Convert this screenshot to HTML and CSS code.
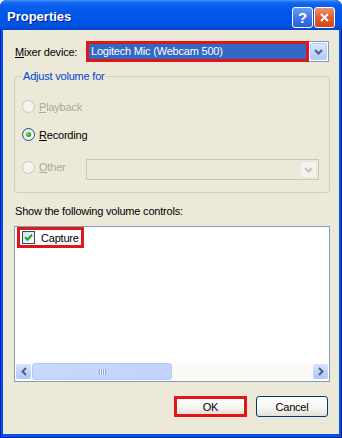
FILE: index.html
```html
<!doctype html>
<html lang="en">
  <head>
    <meta charset="utf-8">
    <meta name="viewport" content="width=device-width, initial-scale=1.0">
    <title>Properties</title>
    <link rel="stylesheet" href="styles.css">
  </head>
  <body>
    <div class="window">
      <div class="titlebar">
        <span class="caption">Properties</span>
        <span class="tbtn help">?</span>
        <span class="tbtn close">
          <svg width="11" height="11" viewBox="0 0 11 11"><path d="M2 2 L9 9 M9 2 L2 9" stroke="#fff" stroke-width="2" fill="none"/></svg>
        </span>
      </div>
      <div class="client">
        <div class="mixer">
          <label class="mixer-label"><u>M</u>ixer device:</label>
          <div class="combo">
            <span class="combo-sel">Logitech Mic (Webcam 500)</span>
            <span class="drop">
              <svg width="9" height="6" viewBox="0 0 9 6"><path d="M1 1 L4.5 4.5 L8 1" fill="none" stroke="#4D6185" stroke-width="2"/></svg>
            </span>
          </div>
        </div>
        <fieldset class="group">
          <legend>Adjust volume for</legend>
          <div class="opt first disabled"><span class="radio"></span><span><u>P</u>layback</span></div>
          <div class="opt second"><span class="radio checked"></span><span><u>R</u>ecording</span></div>
          <div class="opt other disabled">
            <span class="radio"></span><span class="opt-text"><u>O</u>ther</span>
            <div class="combo off">
              <span class="combo-empty"></span>
              <span class="drop off">
                <svg width="9" height="6" viewBox="0 0 9 6"><path d="M1 1 L4.5 4.5 L8 1" fill="none" stroke="#C3C3C3" stroke-width="2"/></svg>
              </span>
            </div>
          </div>
        </fieldset>
        <div class="show">Show the following volume controls:</div>
        <div class="list">
          <div class="items">
            <div class="item">
              <span class="check">
                <svg width="9" height="9" viewBox="0 0 9 9"><path d="M1 4.2 L3.5 6.7 L8 1.8" fill="none" stroke="#21A121" stroke-width="2"/></svg>
              </span>
              <span>Capture</span>
            </div>
          </div>
          <div class="hscroll">
            <span class="sbtn">
              <svg width="6" height="9" viewBox="0 0 6 9"><path d="M5 1 L1.5 4.5 L5 8" fill="none" stroke="#4D6185" stroke-width="2"/></svg>
            </span>
            <span class="thumb"><span class="grip"></span></span>
            <span class="track"></span>
            <span class="sbtn">
              <svg width="6" height="9" viewBox="0 0 6 9"><path d="M1 1 L4.5 4.5 L1 8" fill="none" stroke="#4D6185" stroke-width="2"/></svg>
            </span>
          </div>
        </div>
        <div class="buttons">
          <button class="btn ok">OK</button>
          <button class="btn cancel">Cancel</button>
        </div>
      </div>
    </div>
  </body>
</html>
```

FILE: styles.css
```css
body {
    margin: 0;
    background: #ffffff;
    font-family: "Liberation Sans", Arial, sans-serif;
    font-size: 11px;
    letter-spacing: -0.2px;
    color: #000000;
}
.window {
    width: 342px;
    height: 438px;
    display: flex;
    flex-direction: column;
    background: #0055E5;
    border-radius: 7px 7px 0 0;
    box-shadow: inset 1px 0 #0019CF, inset -1px 0 #001EA0, inset 0 -1px #001EA0;
    overflow: hidden;
}
.titlebar {
    height: 30px;
    flex: none;
    display: flex;
    align-items: center;
    padding: 0 7px 0 7px;
    background: linear-gradient(to bottom, #4A9BFF 0, #1A6EF5 2px, #0A60EE 5px, #0058EA 12px, #0055E6 22px, #0050DC 27px, #0046C8 30px);
}
.caption {
    flex: 1;
    color: #ffffff;
    font-size: 13px;
    font-weight: bold;
    letter-spacing: 0;
    text-shadow: 1px 1px #0A1883;
    padding-top: 2px;
}
.tbtn {
    width: 21px;
    height: 21px;
    box-sizing: border-box;
    border: 1px solid #ffffff;
    border-radius: 3px;
    display: flex;
    align-items: center;
    justify-content: center;
    margin-top: 4px;
}
.help {
    margin-right: 1px;
    background: linear-gradient(to bottom, #6C9CF6, #3A72E6 60%, #2A5FDC);
    color: #ffffff;
    font-size: 15px;
    font-weight: bold;
}
.close {
    background: linear-gradient(to bottom, #EE9577, #E25B30 50%, #D2451A);
}
.client {
    flex: 1;
    margin: 0 3px 4px 3px;
    padding: 0 9px 0 11px;
    background: #ECE9D8;
    display: flex;
    flex-direction: column;
}
.mixer {
    display: flex;
    align-items: center;
    margin-top: 11px;
    height: 21px;
}
.mixer-label {
    width: 71px;
    padding-left: 1px;
    white-space: nowrap;
}
.combo {
    width: 243px;
    height: 21px;
    box-sizing: border-box;
    border: 1px solid #7F9DB9;
    background: #ffffff;
    display: flex;
}
.combo-sel {
    flex: 1;
    margin: -1px 0 -1px -1px;
    border: 3px solid #E3151A;
    background: #316AC5;
    color: #ffffff;
    padding-left: 2px;
    line-height: 15px;
}
.drop {
    width: 17px;
    margin: 1px;
    box-sizing: border-box;
    border: 1px solid #B9CCF7;
    border-radius: 2px;
    background: linear-gradient(to bottom, #DCE7FE, #C1D3FB 60%, #B4C8F6);
    display: flex;
    align-items: center;
    justify-content: center;
}
.group {
    margin: 8px 0 0 0;
    padding: 0 0 12px 7px;
    border: 1px solid #D0D0BF;
    border-radius: 4px;
    min-width: 0;
}
.group legend {
    color: #0046D5;
    padding: 0 1px;
    line-height: 13px;
}
.opt {
    display: flex;
    align-items: center;
    height: 13px;
}
.opt.first {
    margin-top: 17px;
}
.opt.second {
    margin-top: 15px;
}
.opt.other {
    height: 21px;
    margin-top: 18px;
}
.opt.other .radio,
.opt.other .opt-text {
    margin-bottom: 5px;
}
.disabled {
    color: #ACA899;
}
.radio {
    width: 13px;
    height: 13px;
    box-sizing: border-box;
    border: 1px solid #1C5180;
    border-radius: 50%;
    background: radial-gradient(circle at 65% 65%, #ffffff, #DCDCD6);
    margin-right: 4px;
    display: flex;
    align-items: center;
    justify-content: center;
}
.disabled .radio {
    border-color: #CAC8BB;
    background: #F5F4EA;
}
.radio.checked::after {
    content: "";
    width: 5px;
    height: 5px;
    border-radius: 50%;
    background: radial-gradient(circle at 35% 35%, #8FE08F, #21A121 60%, #157815);
}
.opt-text {
    width: 47px;
}
.combo.off {
    width: 233px;
    border-color: #C9C7BA;
    background: #ECE9D8;
}
.combo-empty {
    flex: 1;
}
.drop.off {
    border-color: #E8E8E0;
    background: #F4F3EE;
}
.show {
    margin-top: 12px;
    padding-left: 1px;
    line-height: 13px;
}
.list {
    margin-top: 8px;
    height: 156px;
    box-sizing: border-box;
    border: 1px solid #7F9DB9;
    background: #ffffff;
    display: flex;
    flex-direction: column;
}
.items {
    flex: 1;
}
.item {
    display: inline-flex;
    align-items: center;
    margin-left: 2px;
    height: 21px;
    box-sizing: border-box;
    border: 3px solid #E3151A;
    padding: 0 2px 0 2px;
}
.check {
    width: 13px;
    height: 13px;
    box-sizing: border-box;
    border: 1px solid #1C5180;
    background: linear-gradient(135deg, #DCDCD6, #ffffff);
    margin-right: 6px;
    display: flex;
    align-items: center;
    justify-content: center;
}
.hscroll {
    height: 17px;
    display: flex;
    background: #FBFAF6;
    margin-bottom: 1px;
}
.sbtn {
    width: 17px;
    box-sizing: border-box;
    border: 1px solid #ffffff;
    border-radius: 3px;
    background: linear-gradient(to bottom, #D8E4FE, #C1D3FB 60%, #B0C6F6);
    display: flex;
    align-items: center;
    justify-content: center;
}
.thumb {
    width: 140px;
    box-sizing: border-box;
    border: 1px solid #B4C8F6;
    border-radius: 3px;
    background: linear-gradient(to right, #C9D8FC, #C2D3FC);
    display: flex;
    align-items: center;
    justify-content: center;
}
.grip {
    width: 7px;
    height: 6px;
    background: repeating-linear-gradient(to right, #8CA8E8 0 1px, #EEF3FE 1px 2px);
}
.track {
    flex: 1;
}
.buttons {
    display: flex;
    justify-content: flex-end;
    gap: 9px;
    margin-top: 14px;
    padding-right: 2px;
}
.btn {
    font-family: "Liberation Sans", Arial, sans-serif;
    font-size: 11px;
    letter-spacing: -0.2px;
    color: #000000;
    height: 21px;
    box-sizing: border-box;
    background: linear-gradient(to bottom, #ffffff, #F4F4F0 60%, #E3E0D7);
    padding: 0;
}
.ok {
    width: 73px;
    border: 3px solid #E3151A;
}
.cancel {
    width: 72px;
    border: 1px solid #003C74;
    border-radius: 3px;
}
```
